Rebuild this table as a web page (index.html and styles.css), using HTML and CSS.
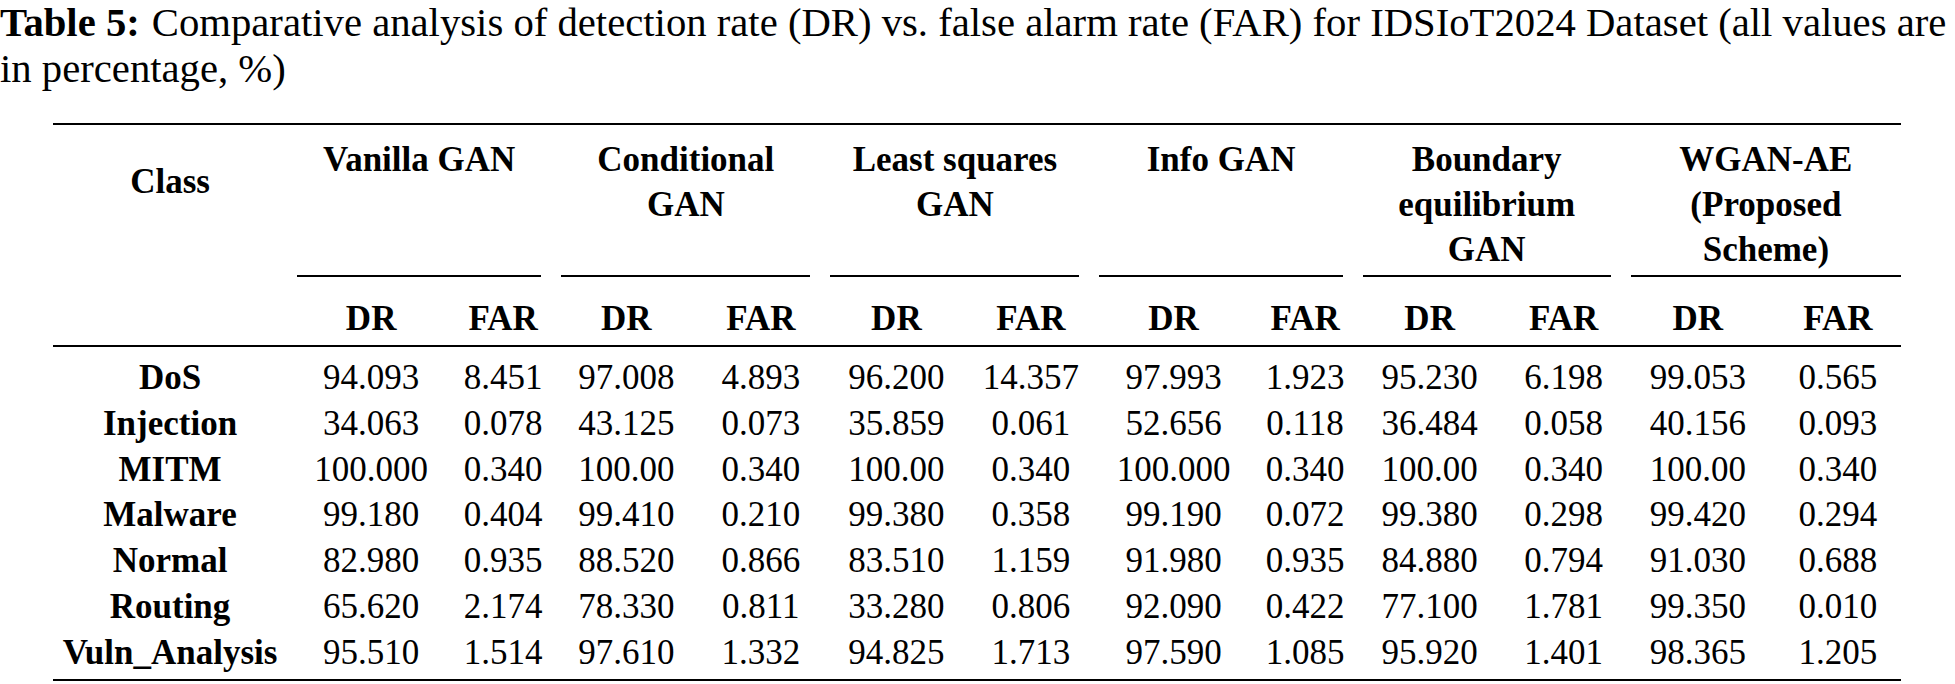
FILE: index.html
```html
<!DOCTYPE html>
<html lang="en">
<head>
<meta charset="utf-8">
<title>Table 5</title>
<link rel="stylesheet" href="styles.css">
</head>
<body>
<p class="caption"><span class="label">Table 5:</span>Comparative analysis of detection rate (DR) vs. false alarm rate (FAR) for IDSIoT2024 Dataset (all values are in percentage, %)</p>
<table class="results">
  <colgroup>
    <col class="c-class">
    <col class="c-v-dr"><col class="c-v-far">
    <col class="c-c-dr"><col class="c-c-far">
    <col class="c-l-dr"><col class="c-l-far">
    <col class="c-i-dr"><col class="c-i-far">
    <col class="c-b-dr"><col class="c-b-far">
    <col class="c-w-dr"><col class="c-w-far">
  </colgroup>
  <thead>
    <tr class="groups">
      <th rowspan="2" class="class-head">Class</th>
      <th colspan="2"><div class="grp">Vanilla GAN</div></th>
      <th colspan="2"><div class="grp">Conditional GAN</div></th>
      <th colspan="2"><div class="grp">Least squares GAN</div></th>
      <th colspan="2"><div class="grp">Info GAN</div></th>
      <th colspan="2"><div class="grp">Boundary equilibrium GAN</div></th>
      <th colspan="2"><div class="grp last">WGAN-AE (Proposed Scheme)</div></th>
    </tr>
    <tr class="metrics">
      <th>DR</th><th>FAR</th>
      <th>DR</th><th>FAR</th>
      <th>DR</th><th>FAR</th>
      <th>DR</th><th>FAR</th>
      <th>DR</th><th>FAR</th>
      <th>DR</th><th>FAR</th>
    </tr>
  </thead>
  <tbody>
    <tr><th>DoS</th><td>94.093</td><td>8.451</td><td>97.008</td><td>4.893</td><td>96.200</td><td>14.357</td><td>97.993</td><td>1.923</td><td>95.230</td><td>6.198</td><td>99.053</td><td>0.565</td></tr>
    <tr><th>Injection</th><td>34.063</td><td>0.078</td><td>43.125</td><td>0.073</td><td>35.859</td><td>0.061</td><td>52.656</td><td>0.118</td><td>36.484</td><td>0.058</td><td>40.156</td><td>0.093</td></tr>
    <tr><th>MITM</th><td>100.000</td><td>0.340</td><td>100.00</td><td>0.340</td><td>100.00</td><td>0.340</td><td>100.000</td><td>0.340</td><td>100.00</td><td>0.340</td><td>100.00</td><td>0.340</td></tr>
    <tr><th>Malware</th><td>99.180</td><td>0.404</td><td>99.410</td><td>0.210</td><td>99.380</td><td>0.358</td><td>99.190</td><td>0.072</td><td>99.380</td><td>0.298</td><td>99.420</td><td>0.294</td></tr>
    <tr><th>Normal</th><td>82.980</td><td>0.935</td><td>88.520</td><td>0.866</td><td>83.510</td><td>1.159</td><td>91.980</td><td>0.935</td><td>84.880</td><td>0.794</td><td>91.030</td><td>0.688</td></tr>
    <tr><th>Routing</th><td>65.620</td><td>2.174</td><td>78.330</td><td>0.811</td><td>33.280</td><td>0.806</td><td>92.090</td><td>0.422</td><td>77.100</td><td>1.781</td><td>99.350</td><td>0.010</td></tr>
    <tr><th>Vuln_Analysis</th><td>95.510</td><td>1.514</td><td>97.610</td><td>1.332</td><td>94.825</td><td>1.713</td><td>97.590</td><td>1.085</td><td>95.920</td><td>1.401</td><td>98.365</td><td>1.205</td></tr>
  </tbody>
</table>
</body>
</html>
```

FILE: styles.css
```css
html, body {
  margin: 0;
  padding: 0;
  background: #ffffff;
  color: #000000;
  font-family: "Liberation Serif", "Times New Roman", serif;
}

.caption {
  margin: 0;
  font-size: 40.7px;
  line-height: 45.5px;
}

.caption .label {
  font-weight: bold;
  margin-right: 12px;
}

.results {
  margin: 32px 0 0 53px;
  width: 1848px;
  table-layout: fixed;
  border-collapse: separate;
  border-spacing: 0;
  border-top: 2px solid #000;
  border-bottom: 2px solid #000;
  font-size: 35px;
}

.c-class { width: 234px; }
.c-v-dr { width: 168px; }
.c-v-far { width: 96px; }
.c-c-dr { width: 150px; }
.c-c-far { width: 119px; }
.c-l-dr { width: 152px; }
.c-l-far { width: 117px; }
.c-i-dr { width: 168px; }
.c-i-far { width: 95px; }
.c-b-dr { width: 154px; }
.c-b-far { width: 114px; }
.c-w-dr { width: 154px; }
.c-w-far { width: 126px; }

.results th,
.results td {
  padding: 0;
  text-align: center;
  white-space: nowrap;
  font-weight: normal;
}

.results th {
  font-weight: bold;
}

.groups th {
  vertical-align: top;
  line-height: 45px;
}

.groups .class-head {
  padding-top: 34px;
  border-bottom: 2px solid #000;
}

.grp {
  box-sizing: border-box;
  height: 152px;
  margin: 0 10px;
  padding: 11.5px 0 0 0;
  border-bottom: 2px solid #000;
  white-space: normal;
}

.grp.last {
  margin-right: 0;
}

.metrics th {
  line-height: 45px;
  padding: 18.5px 0 4.5px 0;
  border-bottom: 2px solid #000;
}

.results tbody th,
.results tbody td {
  line-height: 45.8px;
}

.results tbody tr:first-child th,
.results tbody tr:first-child td {
  padding-top: 8px;
}

.results tbody tr:last-child th,
.results tbody tr:last-child td {
  padding-bottom: 3.5px;
}
```
